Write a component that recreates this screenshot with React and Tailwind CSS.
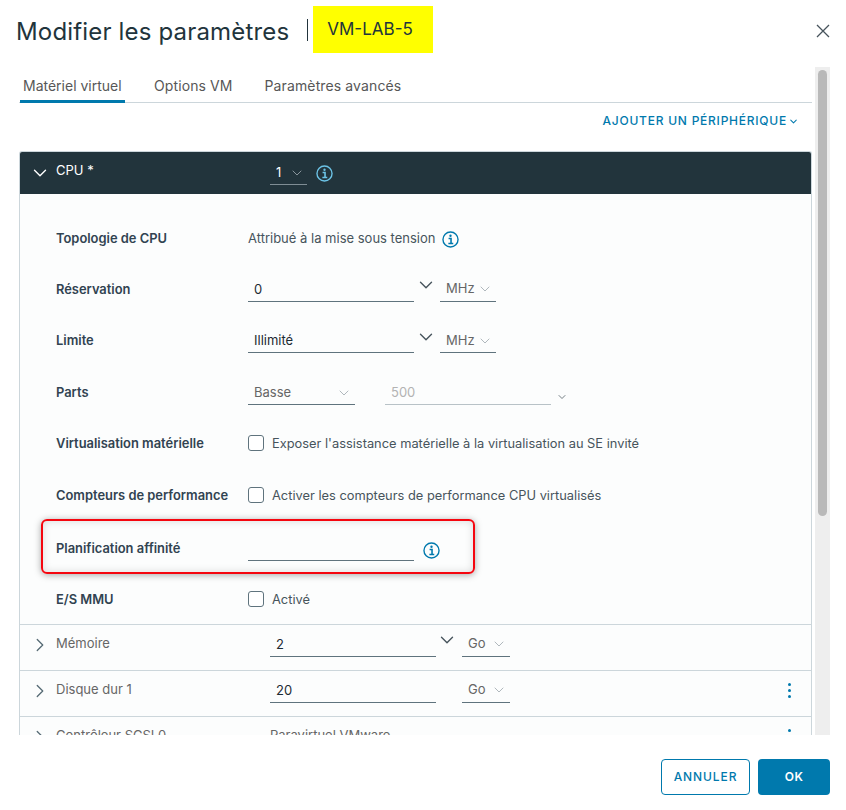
import { ChevronDown, ChevronRight } from 'lucide-react';

const InfoIcon = ({ className }) => (
    <svg viewBox="0 0 16 16" className={className} fill="none" stroke="currentColor">
        <circle cx="8" cy="8" r="7.1" strokeWidth="1.3" />
        <circle cx="8" cy="4.5" r="1.1" fill="currentColor" stroke="none" />
        <path d="M6.2 7h2.3v4.7M6 11.8h4.6" strokeWidth="1.5" />
    </svg>
);

const Chevron = ({ className, strokeWidth = 1.5 }) => (
    <ChevronDown className={className} strokeWidth={strokeWidth} />
);

const Row = ({ label, className, children }) => (
    <div className={`flex items-center pl-[36px] ${className}`}>
        <div className="w-[192px] shrink-0 text-[12.9px] font-semibold text-[#314351]">{label}</div>
        {children}
    </div>
);

const Field = ({ value, className = 'w-[166px]', text = 'text-[#1c2b33]' }) => (
    <div className={`h-[24px] border-b border-[#5f737d] pl-[6px] text-[13px] leading-[22px] ${text} ${className}`}>{value}</div>
);

const UnitSelect = ({ unit, className = 'w-[56px]' }) => (
    <div className={`flex h-[24px] items-center justify-between border-b border-[#5f737d] pl-[6px] pr-[3px] text-[13px] text-[#666] ${className}`}>
        {unit}
        <Chevron className="h-[16px] w-[16px] text-[#a3adb3]" strokeWidth={1.3} />
    </div>
);

const Check = ({ label }) => (
    <div className="flex items-center gap-[8px] text-[12.85px] text-[#47545c]">
        <div className="h-[16px] w-[16px] rounded-[3px] border border-[#5f737d] bg-white" />
        {label}
    </div>
);

const Collapsed = ({ label, className, children }) => (
    <div className={`flex items-center border-t border-[#ccd6db] pb-[6px] pl-[9px] ${className}`}>
        <ChevronRight className="h-[22px] w-[22px] text-[#566a74]" strokeWidth={1.4} />
        <div className="ml-[5px] w-[214px] shrink-0 -translate-y-[1px] text-[13px] text-[#666]">{label}</div>
        {children}
    </div>
);

const Dots = () => (
    <div className="ml-auto mr-[20px] flex flex-col gap-[3px]">
        <span className="h-[3px] w-[3px] rounded-full bg-[#0079ad]" />
        <span className="h-[3px] w-[3px] rounded-full bg-[#0079ad]" />
        <span className="h-[3px] w-[3px] rounded-full bg-[#0079ad]" />
    </div>
);

export default function App() {
    return (
        <div className="flex h-[810px] w-[846px] flex-col overflow-hidden bg-white font-['Inter','Liberation_Sans',sans-serif]">
            <div className="flex h-[67px] shrink-0 items-start pl-[16px] pr-[16px] pt-[6px]">
                <h1 className="mt-[10px] text-[24px] leading-[32px] tracking-[0.17px] text-[#22343c]">Modifier les paramètres</h1>
                <div className="ml-[18px] mt-[13px] h-[22px] w-px bg-[#22343c]" />
                <div className="ml-[5px] flex h-[47px] w-[120px] items-center bg-[#ffff00] pl-[14px] pt-[1px] text-[17px] text-[#22343c]">VM-LAB-5</div>
                <svg viewBox="0 0 14 14" className="ml-auto mt-[18px] h-[14px] w-[14px] text-[#47545c]" fill="none" stroke="currentColor" strokeWidth="1.3">
                    <path d="M1 1l12 12M13 1L1 13" />
                </svg>
            </div>

            <div className="flex h-[668px] shrink-0 pl-[19px] pr-[16px]">
                <div className="w-[793px] shrink-0 overflow-hidden">
                    <div className="flex h-[36px] border-b border-[#ccd6db] pl-[1px]">
                        <div className="h-[36px] w-[105px] border-b-[3px] border-[#0079ad] pl-[3px] text-[14px] leading-[38px] text-[#575757]">Matériel virtuel</div>
                        <div className="ml-[29px] text-[14px] leading-[38px] tracking-[0.1px] text-[#575757]">Options VM</div>
                        <div className="ml-[32px] text-[14px] leading-[38px] tracking-[0.12px] text-[#575757]">Paramètres avancés</div>
                    </div>
                    <div className="flex h-[48px] items-start justify-end pr-[13px] pt-[10px]">
                        <div className="flex items-center gap-[1px] text-[12px] font-medium leading-[16px] tracking-[0.76px] text-[#0079ad]">
                            AJOUTER UN PÉRIPHÉRIQUE
                            <Chevron className="h-[11px] w-[11px]" strokeWidth={2.2} />
                        </div>
                    </div>

                    <div className="relative rounded-t-[3px] border-x border-t border-[#ccd6db] bg-[#fcfdfd]">
                        <div className="flex h-[42px] items-center rounded-t-[2px] bg-[#22343c] pl-[9px]">
                            <ChevronDown className="h-[22px] w-[22px] text-white" strokeWidth={1.5} />
                            <div className="ml-[5px] w-[214px] -translate-y-[2px] text-[13px] text-white">CPU *</div>
                            <div className="flex h-[24px] w-[37px] items-center justify-between border-b border-[#7f8d94] pl-[6px] pr-[2px] text-[13px] text-white">
                                1
                                <Chevron className="h-[16px] w-[16px] text-[#9aa5ab]" strokeWidth={1.3} />
                            </div>
                            <InfoIcon className="ml-[9px] h-[17px] w-[17px] text-[#6cc3e6]" />
                        </div>

                        <div className="pt-[20px]">
                            <Row label="Topologie de CPU" className="h-[50px]">
                                <span className="text-[13px] text-[#47545c]">Attribué à la mise sous tension</span>
                                <InfoIcon className="ml-[7px] mt-[1px] h-[17px] w-[17px] text-[#0079ad]" />
                            </Row>
                            <Row label="Réservation" className="h-[51px]">
                                <Field value="0" />
                                <Chevron className="ml-[1px] -mt-[9px] h-[22px] w-[22px] text-[#47545c]" />
                                <UnitSelect unit="MHz" className="ml-[3px] w-[56px]" />
                            </Row>
                            <Row label="Limite" className="h-[52px]">
                                <Field value="Illimité" />
                                <Chevron className="ml-[1px] -mt-[9px] h-[22px] w-[22px] text-[#47545c]" />
                                <UnitSelect unit="MHz" className="ml-[3px] w-[56px]" />
                            </Row>
                            <Row label="Parts" className="h-[52px]">
                                <UnitSelect unit="Basse" className="w-[107px]" />
                                <Field value="500" text="text-[#b3b3b3]" className="ml-[30px] w-[166px] border-[#b8c2c7]" />
                                <Chevron className="ml-[5px] mt-[8px] h-[12px] w-[12px] text-[#47545c]" />
                            </Row>
                            <Row label="Virtualisation matérielle" className="h-[49px]">
                                <Check label="Exposer l'assistance matérielle à la virtualisation au SE invité" />
                            </Row>
                            <Row label="Compteurs de performance" className="h-[55px]">
                                <Check label="Activer les compteurs de performance CPU virtualisés" />
                            </Row>
                            <Row label="Planification affinité" className="h-[52px]">
                                <Field value="" />
                                <InfoIcon className="ml-[9px] mt-[2px] h-[17px] w-[17px] text-[#0079ad]" />
                            </Row>
                            <Row label="E/S MMU" className="h-[49px]">
                                <Check label="Activé" />
                            </Row>
                        </div>

                        <Collapsed label="Mémoire" className="h-[46px]">
                            <Field value="2" />
                            <Chevron className="-mt-[9px] h-[22px] w-[22px] text-[#47545c]" />
                            <UnitSelect unit="Go" className="ml-[4px] w-[48px]" />
                        </Collapsed>
                        <Collapsed label="Disque dur 1" className="h-[46px]">
                            <Field value="20" />
                            <UnitSelect unit="Go" className="ml-[26px] w-[48px]" />
                            <Dots />
                        </Collapsed>
                        <Collapsed label="Contrôleur SCSI 0" className="h-[46px]">
                            <span className="-translate-y-[1px] text-[13px] text-[#666]">Paravirtuel VMware</span>
                            <Dots />
                        </Collapsed>

                        <div className="absolute left-[21px] top-[367px] h-[55px] w-[434px] rounded-[6px] border-2 border-[#f5060f] shadow-[0_1px_7px_rgba(0,0,0,0.35),inset_0_0_8px_rgba(0,0,0,0.14)]" />
                    </div>
                </div>

                <div className="ml-[3px] w-[15px] shrink-0 bg-[#eeeeee] px-[3px] pt-[3px]">
                    <div className="h-[446px] w-[9px] rounded-full bg-[#b9b9b9]" />
                </div>
            </div>

            <div className="flex flex-1 justify-end gap-[8px] pr-[16px] pt-[24px]">
                <div className="flex h-[36px] w-[89px] items-center justify-center rounded-[4px] border border-[#0079ad] text-[12px] font-medium tracking-[0.9px] text-[#0079ad]">ANNULER</div>
                <div className="flex h-[36px] w-[72px] items-center justify-center rounded-[4px] bg-[#0079ad] text-[12px] font-semibold tracking-[0.5px] text-white">OK</div>
            </div>
        </div>
    );
}
